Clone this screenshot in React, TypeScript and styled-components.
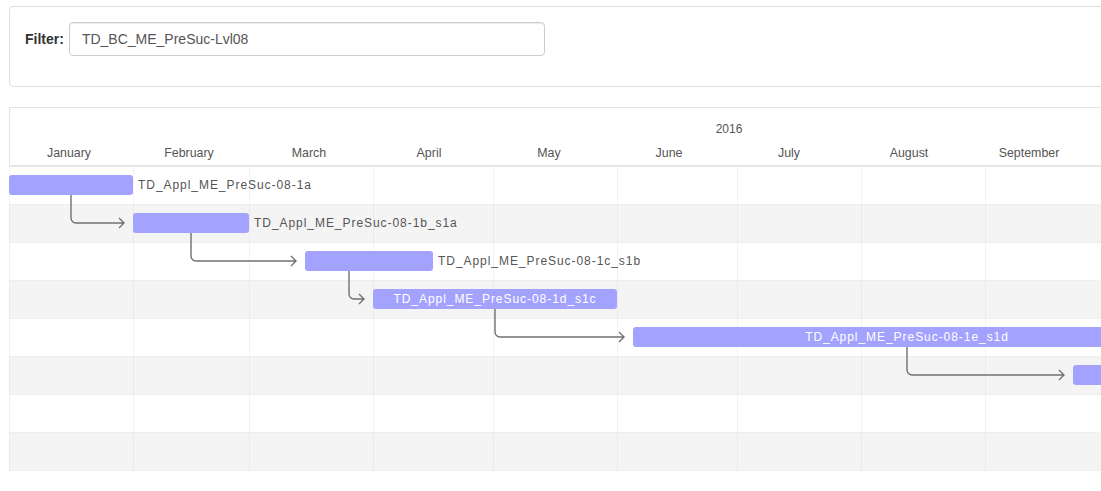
import React from "react";
import styled, { createGlobalStyle } from "styled-components";

const DAY = 4;
const MONTH_DAYS = [31, 29, 31, 30, 31, 30, 31, 31, 30, 31, 30, 31];
// only the months that fit in the visible part of the timeline
const MONTHS = [
  "January",
  "February",
  "March",
  "April",
  "May",
  "June",
  "July",
  "August",
  "September",
];
const ROW_H = 38;
const BAR_H = 20;
const BAR_TOP = 8;

type Task = {
  name: string;
  x: number;
  w: number;
  inside?: boolean;
};

const tasks: Task[] = [
  { name: "TD_Appl_ME_PreSuc-08-1a", x: 0, w: 124 },
  { name: "TD_Appl_ME_PreSuc-08-1b_s1a", x: 124, w: 116 },
  { name: "TD_Appl_ME_PreSuc-08-1c_s1b", x: 296, w: 128 },
  { name: "TD_Appl_ME_PreSuc-08-1d_s1c", x: 364, w: 244, inside: true },
  { name: "TD_Appl_ME_PreSuc-08-1e_s1d", x: 624, w: 548, inside: true },
  { name: "", x: 1064, w: 400, inside: true },
];

// vertical x of each dependency arrow (from task i to task i + 1)
const arrowX = [62, 182, 340, 486, 898];

const GlobalStyle = createGlobalStyle`
  html, body {
    margin: 0;
    padding: 0;
    overflow: hidden;
    background: #fff;
  }
  body {
    font-family: "Liberation Sans", Arial, sans-serif;
    color: #333;
  }
`;

const Page = styled.div`
  width: 100vw;
  box-sizing: border-box;
  overflow: hidden;
  padding: 6px 0 0 9px;
`;

const FilterPanel = styled.div`
  width: calc(100% + 60px);
  box-sizing: border-box;
  border: 1px solid #ddd;
  border-radius: 4px;
  padding: 15px 15px 30px;
`;

const FormRow = styled.div`
  display: flex;
  align-items: center;
  gap: 5px;
`;

const Label = styled.label`
  font-size: 14px;
  font-weight: bold;
  color: #333;
`;

const Input = styled.input`
  width: 476px;
  height: 34px;
  box-sizing: border-box;
  padding: 6px 12px;
  border: 1px solid #ccc;
  border-radius: 4px;
  box-shadow: inset 0 1px 1px rgba(0, 0, 0, 0.075);
  font-family: "Liberation Sans", Arial, sans-serif;
  font-size: 14px;
  color: #555;
  outline: none;
`;

const Gantt = styled.div`
  margin-top: 20px;
  overflow: hidden;
`;

const Header = styled.div`
  height: 60px;
  box-sizing: border-box;
  border-top: 1px solid #e4e4e4;
  border-bottom: 2px solid #e6e6e6;
  box-shadow: inset 1px 0 #e4e4e4;
  padding-top: 14px;
  display: flex;
  flex-direction: column;
  gap: 10px;
  font-size: 12px;
  line-height: 14px;
  color: #555;
`;

const YearRow = styled.div`
  width: 1440px;
  text-align: center;
`;

const MonthRow = styled.div`
  display: grid;
  grid-template-columns: repeat(${MONTHS.length}, 120px);
`;

const MonthLabel = styled.div`
  text-align: center;
  font-size: 12.4px;
`;

const Body = styled.div`
  position: relative;
`;

const Rows = styled.div`
  display: flex;
  flex-direction: column;
`;

const Row = styled.div<{ $alt: boolean }>`
  height: ${ROW_H}px;
  box-sizing: border-box;
  background: ${({ $alt }) => ($alt ? "#f4f4f4" : "#fff")};
  border-bottom: 1px solid #eeeff1;
`;

const Ticks = styled.div`
  position: absolute;
  inset: 0;
  display: grid;
  grid-template-columns: ${MONTH_DAYS.map((d) => `${d * DAY}px`).join(" ")};
  pointer-events: none;
`;

const Tick = styled.div`
  border-left: 1px solid rgba(200, 200, 200, 0.22);
`;

const Bar = styled.div`
  position: absolute;
  height: ${BAR_H}px;
  border-radius: 3px;
  background: #a3a3ff;
  display: flex;
  align-items: center;
  justify-content: center;
  font-size: 12px;
  letter-spacing: 0.95px;
  color: #fff;
  white-space: nowrap;
`;

const OutLabel = styled.span`
  position: absolute;
  left: calc(100% + 5px);
  top: 50%;
  transform: translateY(-50%);
  color: #555;
`;

const Arrows = styled.svg`
  position: absolute;
  left: 0;
  top: 0;
  overflow: visible;
  pointer-events: none;
`;

function arrowPath(i: number) {
  const sx = arrowX[i];
  const sy = i * ROW_H + BAR_TOP + BAR_H;
  const ey = (i + 1) * ROW_H + BAR_TOP + BAR_H / 2;
  const ex = tasks[i + 1].x - 9;
  return `M ${sx} ${sy} V ${ey - 5} a 5 5 0 0 0 5 5 L ${ex} ${ey} m -5 -5 l 5 5 l -5 5`;
}

export default function App() {
  return (
    <>
      <GlobalStyle />
      <Page>
        <FilterPanel>
          <FormRow>
            <Label htmlFor="filter">Filter:</Label>
            <Input id="filter" defaultValue="TD_BC_ME_PreSuc-Lvl08" />
          </FormRow>
        </FilterPanel>

        <Gantt>
          <Header>
            <YearRow>2016</YearRow>
            <MonthRow>
              {MONTHS.map((m) => (
                <MonthLabel key={m}>{m}</MonthLabel>
              ))}
            </MonthRow>
          </Header>

          <Body>
            <Rows>
              {Array.from({ length: 8 }).map((_, i) => (
                <Row key={i} $alt={i % 2 === 1} />
              ))}
            </Rows>
            <Ticks>
              {MONTH_DAYS.map((_, i) => (
                <Tick key={i} />
              ))}
            </Ticks>
            {tasks.map((t, i) => (
              <Bar
                key={i}
                style={{ left: t.x, top: i * ROW_H + BAR_TOP, width: t.w }}
              >
                {t.inside ? t.name : <OutLabel>{t.name}</OutLabel>}
              </Bar>
            ))}
            <Arrows width="1100" height="310">
              {arrowX.map((_, i) => (
                <path
                  key={i}
                  d={arrowPath(i)}
                  fill="none"
                  stroke="#707070"
                  strokeWidth="1.4"
                />
              ))}
            </Arrows>
          </Body>
        </Gantt>
      </Page>
    </>
  );
}
